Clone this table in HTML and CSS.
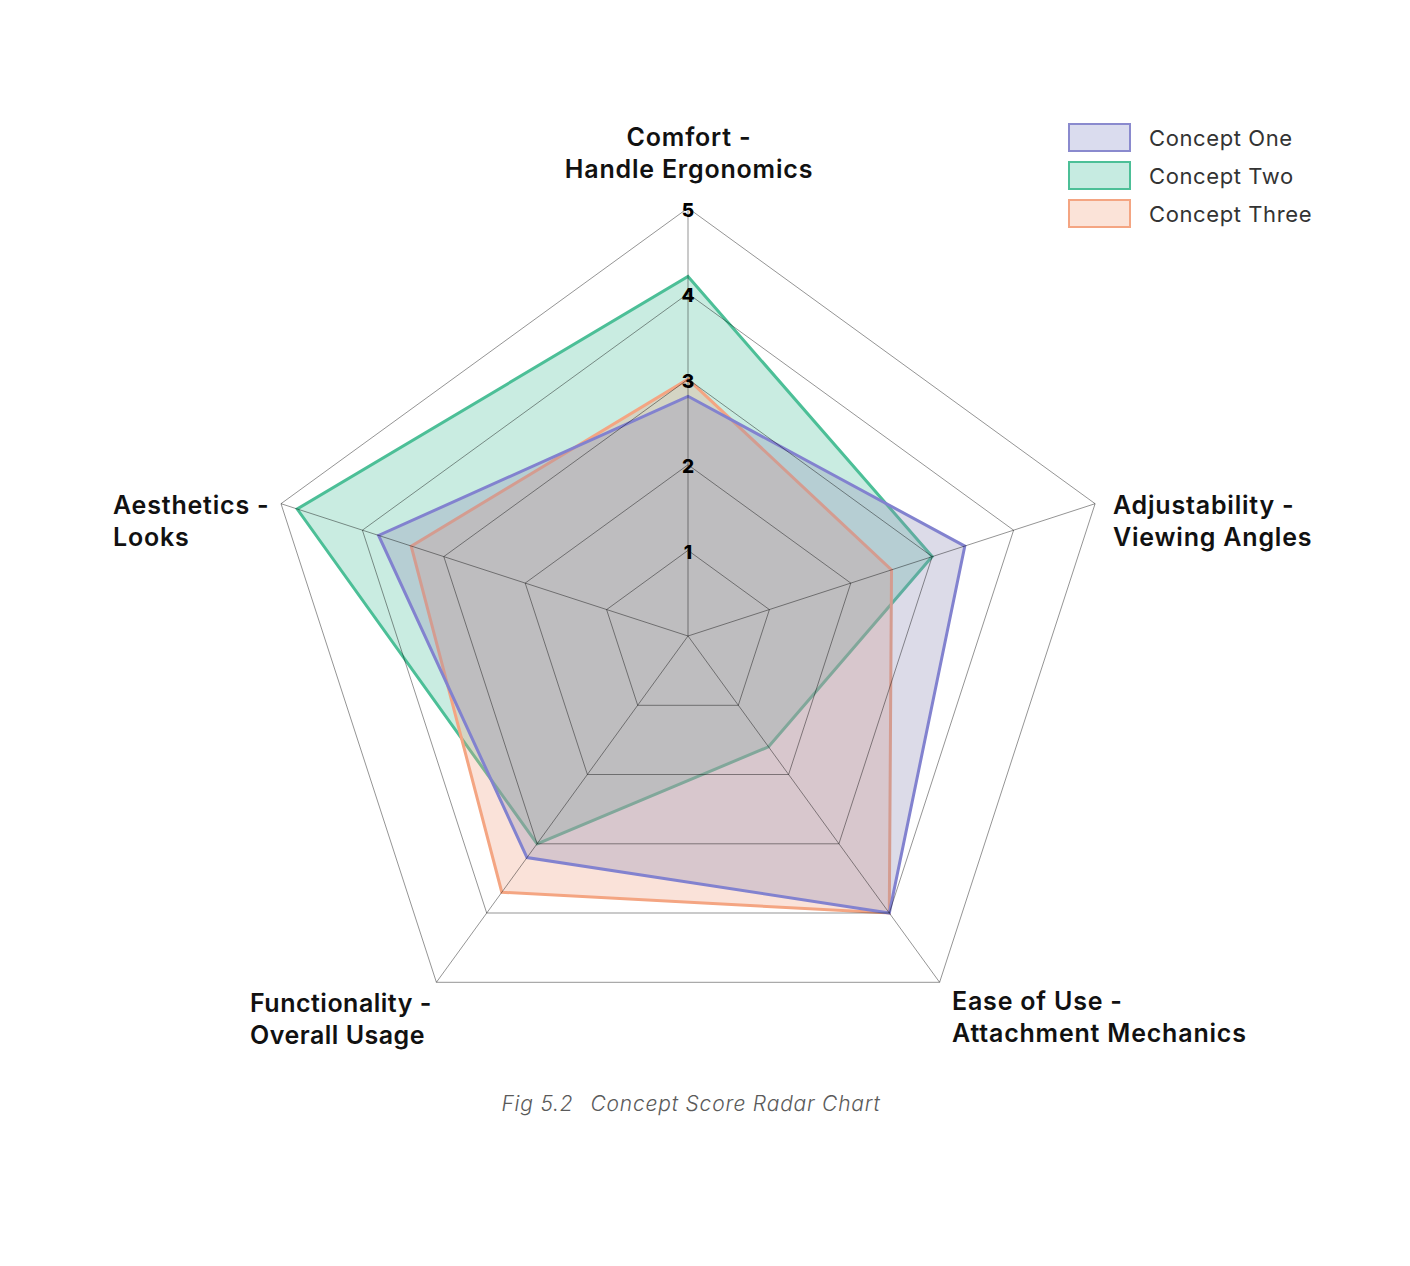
FILE: index.html
```html
<!DOCTYPE html>
<html lang="en">
<head>
<meta charset="utf-8">
<title>Concept Score Radar Chart</title>
<link rel="stylesheet" href="styles.css">
</head>
<body>
<figure class="figure">
  <div class="chart">
    <svg class="radar" width="1410" height="1080" viewBox="0 0 1410 1080" xmlns="http://www.w3.org/2000/svg">
      <g class="fills">
        <polygon class="area area-two" points="688,276.5 932.2,556.6 768.5,746.8 537.1,843.8 297.2,509"/>
        <polygon class="area area-three" points="688,379.2 891.5,569.9 889.3,913 501.8,892.2 411.2,546.1"/>
        <polygon class="area area-one" points="688,396.3 964.8,546.1 889.3,913 527,857.6 378.6,535.5"/>
      </g>
      <g class="grid">
        <polygon points="688,550.4 769.4,609.6 738.3,705.3 637.7,705.3 606.6,609.6"/>
        <polygon points="688,464.8 850.8,583.1 788.6,774.5 587.4,774.5 525.2,583.1"/>
        <polygon points="688,379.2 932.2,556.6 838.9,843.8 537.1,843.8 443.8,556.6"/>
        <polygon points="688,293.6 1013.6,530.2 889.3,913 486.7,913 362.4,530.2"/>
        <polygon points="688,208 1095.1,503.7 939.6,982.3 436.4,982.3 281,503.7"/>
        <line x1="688" y1="636" x2="688" y2="208"/>
        <line x1="688" y1="636" x2="1095.1" y2="503.7"/>
        <line x1="688" y1="636" x2="939.6" y2="982.3"/>
        <line x1="688" y1="636" x2="436.4" y2="982.3"/>
        <line x1="688" y1="636" x2="281" y2="503.7"/>
      </g>
      <g class="ticks">
        <text x="688" y="552">1</text>
        <text x="688" y="466.5">2</text>
        <text x="688" y="381">3</text>
        <text x="688" y="295.5">4</text>
        <text x="688" y="210">5</text>
      </g>
    </svg>

    <div class="axis-label axis-top">Comfort -<br>Handle Ergonomics</div>
    <div class="axis-label axis-right">Adjustability -<br>Viewing Angles</div>
    <div class="axis-label axis-bottom-right">Ease of Use -<br>Attachment Mechanics</div>
    <div class="axis-label axis-bottom-left">Functionality -<br>Overall Usage</div>
    <div class="axis-label axis-left">Aesthetics -<br>Looks</div>

    <ul class="legend">
      <li class="legend-item"><span class="swatch swatch-one"></span><span class="legend-text">Concept One</span></li>
      <li class="legend-item"><span class="swatch swatch-two"></span><span class="legend-text">Concept Two</span></li>
      <li class="legend-item"><span class="swatch swatch-three"></span><span class="legend-text">Concept Three</span></li>
    </ul>
  </div>
  <figcaption class="caption"><span class="fig-no">Fig 5.2</span><span class="fig-title">Concept Score Radar Chart</span></figcaption>
</figure>
</body>
</html>
```

FILE: styles.css
```css
html, body {
  margin: 0;
  padding: 0;
  background: #ffffff;
}

body {
  width: 1410px;
  height: 1266px;
  overflow: hidden;
  font-family: "Inter", "Liberation Sans", sans-serif;
  color: #111111;
}

.figure {
  margin: 0;
  width: 1410px;
}

.chart {
  position: relative;
  width: 1410px;
  height: 1080px;
}

.radar {
  display: block;
}

.area {
  stroke-width: 3;
  stroke-linejoin: miter;
  fill-opacity: 0.3;
}

.area-one {
  fill: #8a88b4;
  stroke: #8282cf;
}

.area-two {
  fill: #4dbf9a;
  stroke: #4cbf97;
}

.area-three {
  fill: #f0a080;
  stroke: #f4a582;
}

.grid polygon,
.grid line {
  fill: none;
  stroke: rgba(0, 0, 0, 0.42);
  stroke-width: 1;
}

.ticks text {
  font-family: "Inter", "Liberation Sans", sans-serif;
  font-weight: 800;
  font-size: 19px;
  fill: #000000;
  text-anchor: middle;
  dominant-baseline: central;
}

.axis-label {
  position: absolute;
  font-size: 25px;
  line-height: 32px;
  font-weight: 600;
  letter-spacing: 0.8px;
  color: #111111;
  white-space: nowrap;
}

.axis-top {
  top: 121px;
  left: 489px;
  width: 400px;
  text-align: center;
}

.axis-right {
  top: 489px;
  left: 1113px;
}

.axis-left {
  top: 489px;
  left: 113px;
}

.axis-bottom-left {
  top: 987px;
  left: 250px;
  letter-spacing: 0.5px;
}

.axis-bottom-right {
  top: 985px;
  left: 952px;
}

.legend {
  position: absolute;
  top: 123px;
  left: 1068px;
  margin: 0;
  padding: 0;
  list-style: none;
  display: flex;
  flex-direction: column;
  gap: 9px;
}

.legend-item {
  display: flex;
  align-items: center;
  gap: 18px;
  height: 29px;
}

.swatch {
  box-sizing: border-box;
  width: 63px;
  height: 29px;
  border: 2.5px solid;
}

.swatch-one {
  background: #dadcee;
  border-color: #8a8ace;
}

.swatch-two {
  background: #c6ebe1;
  border-color: #4cbf97;
}

.swatch-three {
  background: #fbe3d8;
  border-color: #f4a582;
}

.legend-text {
  font-size: 22px;
  font-weight: 400;
  color: #333333;
  letter-spacing: 0.6px;
}

.caption {
  margin: 12px 0 0 0;
  text-align: center;
  padding-right: 28px;
  font-size: 21px;
  line-height: 24px;
  font-style: italic;
  font-weight: 300;
  color: #5a5a5a;
  letter-spacing: 0.8px;
}

.fig-title {
  margin-left: 17px;
}
```
